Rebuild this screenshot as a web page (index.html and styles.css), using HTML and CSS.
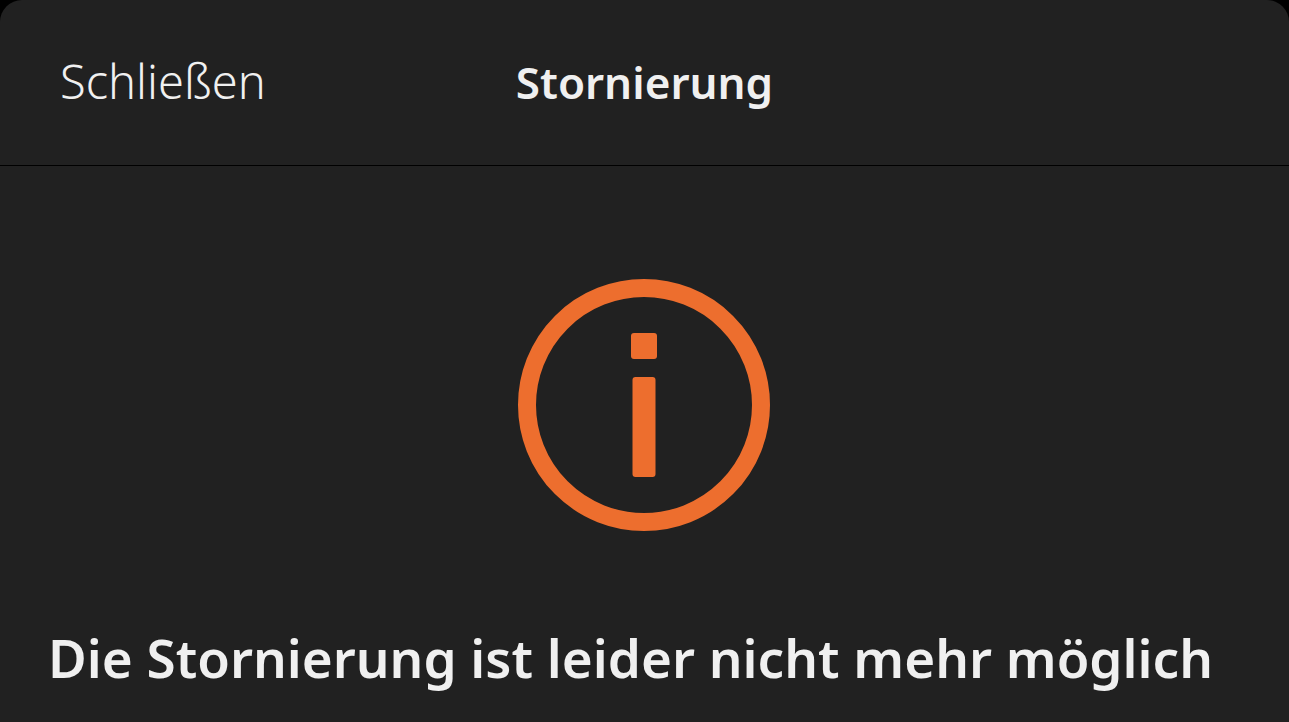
FILE: index.html
```html
<!DOCTYPE html>
<html lang="de">
<head>
<meta charset="utf-8">
<meta name="viewport" content="width=device-width, initial-scale=1">
<title>Stornierung</title>
<link rel="stylesheet" href="styles.css">
</head>
<body>
<div class="sheet">
  <header class="bar">
    <button class="close" type="button">Schließen</button>
    <h1 class="title">Stornierung</h1>
  </header>
  <main class="content">
    <svg class="icon" viewBox="0 0 252 252" aria-hidden="true">
      <circle cx="126" cy="126" r="117" fill="none" stroke="currentColor" stroke-width="18"/>
      <rect x="113" y="54" width="26" height="26" rx="3" fill="currentColor"/>
      <rect x="114.5" y="98" width="23" height="100" rx="3" fill="currentColor"/>
    </svg>
    <p class="message">Die Stornierung ist leider nicht mehr möglich</p>
  </main>
</div>
</body>
</html>
```
FILE: styles.css
```css
* {
  box-sizing: border-box;
}

body {
  margin: 0;
  background: #000;
  color: #f0f0f0;
  font-family: "Noto Sans", "Open Sans", sans-serif;
}

.sheet {
  min-height: 100vh;
  background: #212121;
  border-radius: 22px 22px 0 0;
}

.bar {
  display: grid;
  grid-template-columns: 1fr auto 1fr;
  align-items: baseline;
  padding: 49px 60px 51px;
  border-bottom: 1px solid #000;
}

.close {
  justify-self: start;
  padding: 0;
  border: 0;
  background: none;
  color: inherit;
  font: 300 47px/64px "Noto Sans", "Open Sans", sans-serif;
}

.title {
  margin: 0;
  font-size: 44px;
  line-height: 64px;
  font-weight: 600;
}

.content {
  display: flex;
  flex-direction: column;
  align-items: center;
  padding: 113px 50px 0 48px;
}

.icon {
  width: 252px;
  height: 252px;
  color: #ed6e2e;
}

.message {
  align-self: stretch;
  margin: 89px 0 0;
  font-size: 53px;
  line-height: 76px;
  font-weight: 600;
}
```
